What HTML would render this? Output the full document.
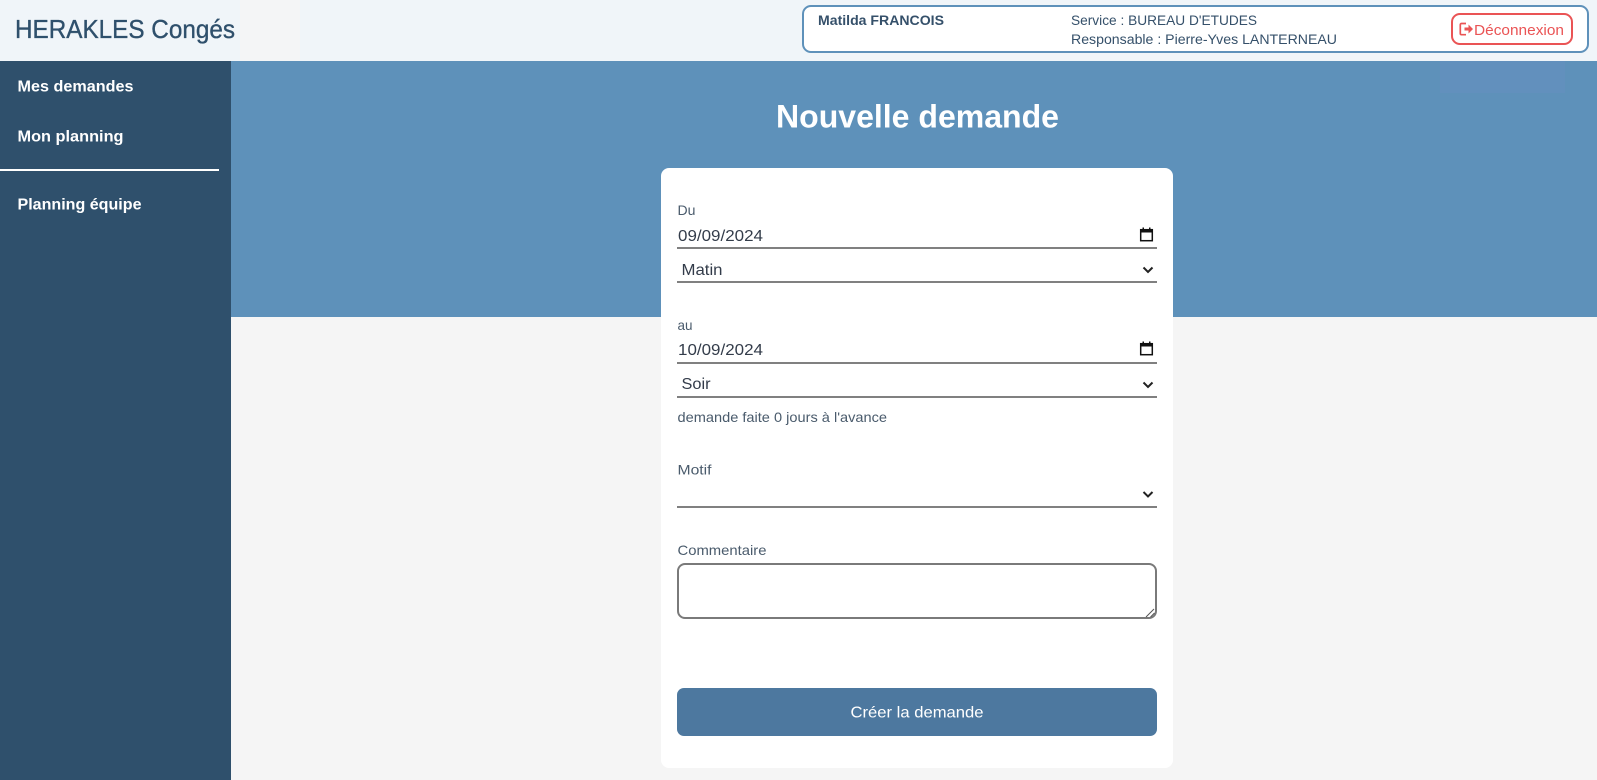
<!DOCTYPE html>
<html lang="fr">
<head>
<meta charset="utf-8">
<title>HERAKLES Congés</title>
<style>
html,body{margin:0;padding:0;width:1597px;height:780px;overflow:hidden;background:#f5f5f5;font-family:"Liberation Sans",sans-serif}
.a{position:absolute;box-sizing:border-box}
svg{position:absolute;left:0;top:0}
text{font-family:"Liberation Sans",sans-serif}
</style>
</head>
<body>
<div class="a" style="left:0;top:0;width:1597px;height:61px;background:#f0f5f9"></div>
<div class="a" style="left:240px;top:0;width:60px;height:61px;background:#f4f5f6"></div>
<div class="a" style="left:0;top:61px;width:231px;height:719px;background:#2f506c"></div>
<div class="a" style="left:0;top:169px;width:219px;height:2px;background:#fff"></div>
<div class="a" style="left:231px;top:61px;width:1366px;height:256px;background:#5e91ba"></div>
<div class="a" style="left:1440px;top:61px;width:125px;height:32px;background:#6290bd"></div>
<div class="a" style="left:802px;top:5px;width:787px;height:48px;background:#fff;border:2px solid #5e91ba;border-radius:9px"></div>
<div class="a" style="left:1451px;top:13px;width:122px;height:32px;background:#fff;border:2px solid #ea5455;border-radius:9px"></div>
<div class="a" style="left:661px;top:168px;width:512px;height:600px;background:#fff;border-radius:8px"></div>
<div class="a" style="left:677px;top:247px;width:480px;height:2px;background:#808080"></div>
<div class="a" style="left:677px;top:281px;width:480px;height:2px;background:#808080"></div>
<div class="a" style="left:677px;top:362px;width:480px;height:2px;background:#808080"></div>
<div class="a" style="left:677px;top:396px;width:480px;height:2px;background:#808080"></div>
<div class="a" style="left:677px;top:506px;width:480px;height:2px;background:#808080"></div>
<div class="a" style="left:677px;top:563px;width:480px;height:56px;background:#fff;border:2px solid #7a7a7a;border-radius:8px"></div>
<div class="a" style="left:677px;top:688px;width:480px;height:48px;background:#4d789f;border-radius:7px"></div>

<svg width="1597" height="780" viewBox="0 0 1597 780">
<text x="15" y="38" font-size="26" fill="#2f506c" stroke="#2f506c" stroke-width="0.35" textLength="220" lengthAdjust="spacingAndGlyphs">HERAKLES Congés</text>
<g fill="#fff" font-weight="700" font-size="16">
<text x="17.500" y="91.500" textLength="116" lengthAdjust="spacingAndGlyphs">Mes demandes</text>
<text x="17.500" y="141.500" textLength="106" lengthAdjust="spacingAndGlyphs">Mon planning</text>
<text x="17.500" y="209.500" textLength="124" lengthAdjust="spacingAndGlyphs">Planning équipe</text>
<text x="776" y="127.500" font-size="32" textLength="283" lengthAdjust="spacingAndGlyphs">Nouvelle demande</text>
</g>
<g fill="#35506a" font-size="13.500">
<text x="818" y="25" font-weight="700" textLength="126" lengthAdjust="spacingAndGlyphs">Matilda FRANCOIS</text>
<text x="1071" y="25" textLength="186" lengthAdjust="spacingAndGlyphs">Service : BUREAU D'ETUDES</text>
<text x="1071" y="44" textLength="266" lengthAdjust="spacingAndGlyphs">Responsable : Pierre-Yves LANTERNEAU</text>
</g>
<text x="1474" y="35" font-size="14.500" fill="#ea5455" textLength="90" lengthAdjust="spacingAndGlyphs">Déconnexion</text>
<path d="M1466 23.500h-4.500a1.200 1.200 0 0 0-1.200 1.200v8.800a1.200 1.200 0 0 0 1.200 1.200h4.500" fill="none" stroke="#ea5455" stroke-width="1.700"/>
<path d="M1464.500 27.500h4v-3l4.500 4.500-4.500 4.500v-3h-4z" fill="#ea5455"/>

<g fill="#4a5b6c" font-size="14">
<text x="677.500" y="215" textLength="18" lengthAdjust="spacingAndGlyphs">Du</text>
<text x="677.500" y="330" textLength="15" lengthAdjust="spacingAndGlyphs">au</text>
<text x="677.500" y="422" textLength="209.500" lengthAdjust="spacingAndGlyphs">demande faite 0 jours à l'avance</text>
<text x="677.500" y="474.500" textLength="34" lengthAdjust="spacingAndGlyphs">Motif</text>
<text x="677.500" y="555" textLength="89" lengthAdjust="spacingAndGlyphs">Commentaire</text>
</g>
<g fill="#333c4a" font-size="16">
<text x="678" y="241" textLength="85" lengthAdjust="spacingAndGlyphs">09/09/2024</text>
<text x="681.500" y="275" textLength="41" lengthAdjust="spacingAndGlyphs">Matin</text>
<text x="678" y="355" textLength="85" lengthAdjust="spacingAndGlyphs">10/09/2024</text>
<text x="681.500" y="389" textLength="29" lengthAdjust="spacingAndGlyphs">Soir</text>
</g>
<text x="850.500" y="717.500" font-size="16" fill="#fff" textLength="133" lengthAdjust="spacingAndGlyphs">Créer la demande</text>

<g fill="none" stroke="#111" stroke-width="1.500"><rect x="1140.700" y="229.700" width="11.600" height="11"/><rect x="1140.700" y="343.700" width="11.600" height="11"/></g>
<path d="M1140 229h13v3.500h-13zM1142.500 227.500h1.500v2h-1.500zM1149 227.500h1.500v2H1149zM1140 343h13v3.500h-13zM1142.500 341.500h1.500v2h-1.500zM1149 341.500h1.500v2H1149z" fill="#111"/>
<g fill="none" stroke="#222" stroke-width="2"><path d="M1143.500 267.500l4.500 4.500 4.500-4.500"/><path d="M1143.500 382.500l4.500 4.500 4.500-4.500"/><path d="M1143.500 492l4.500 4.500 4.500-4.500"/></g>
<path d="M1146 617l8-8M1150.500 617l4-4" stroke="#555" stroke-width="1" fill="none"/>
</svg>
</body>
</html>
